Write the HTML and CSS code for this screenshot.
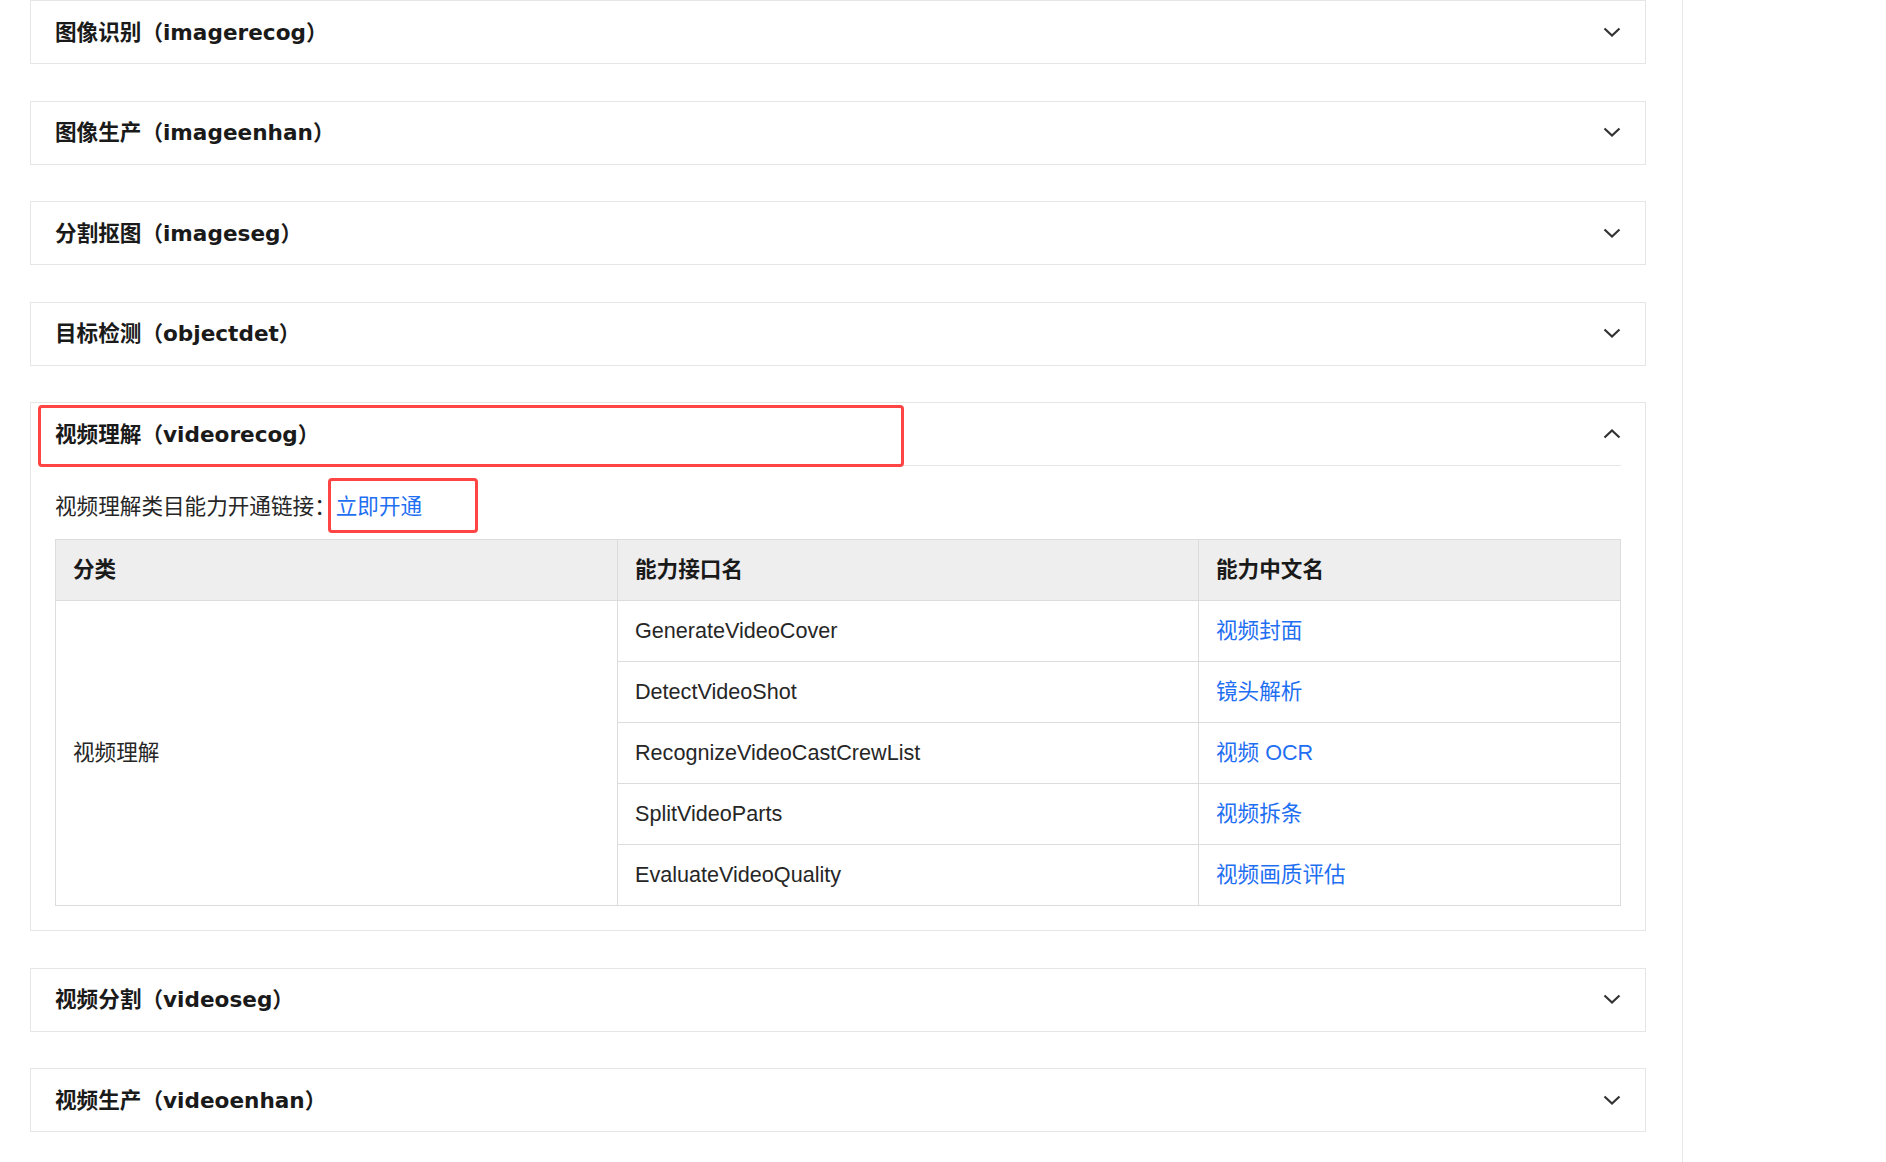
FILE: index.html
```html
<!DOCTYPE html>
<html lang="zh-CN">
<head>
    <meta charset="UTF-8">
    <meta name="viewport" content="width=device-width, initial-scale=1.0">
    <title>视觉智能开放平台 - 能力列表</title>
    <link rel="stylesheet" href="styles.css">
</head>
<body>
    <div class="page">
        <!-- Category list -->
        <main class="content">
            <section class="panel">
                <div class="panel-head">
                    <h3 class="panel-title">图像识别（imagerecog）</h3>
                    <svg class="chevron" viewBox="0 0 18 10"><polyline points="1.5,1.5 9,8.5 16.5,1.5"/></svg>
                </div>
            </section>

            <section class="panel">
                <div class="panel-head">
                    <h3 class="panel-title">图像生产（imageenhan）</h3>
                    <svg class="chevron" viewBox="0 0 18 10"><polyline points="1.5,1.5 9,8.5 16.5,1.5"/></svg>
                </div>
            </section>

            <section class="panel">
                <div class="panel-head">
                    <h3 class="panel-title">分割抠图（imageseg）</h3>
                    <svg class="chevron" viewBox="0 0 18 10"><polyline points="1.5,1.5 9,8.5 16.5,1.5"/></svg>
                </div>
            </section>

            <section class="panel">
                <div class="panel-head">
                    <h3 class="panel-title">目标检测（objectdet）</h3>
                    <svg class="chevron" viewBox="0 0 18 10"><polyline points="1.5,1.5 9,8.5 16.5,1.5"/></svg>
                </div>
            </section>

            <!-- Expanded category -->
            <section class="panel open">
                <div class="panel-head">
                    <h3 class="panel-title">视频理解（videorecog）</h3>
                    <svg class="chevron" viewBox="0 0 18 10"><polyline points="1.5,8.5 9,1.5 16.5,8.5"/></svg>
                </div>
                <div class="panel-body">
                    <p class="open-link">视频理解类目能力开通链接：<a href="#">立即开通</a></p>
                    <table class="ability-table">
                        <colgroup>
                            <col class="col-type">
                            <col class="col-api">
                            <col>
                        </colgroup>
                        <thead>
                            <tr>
                                <th>分类</th>
                                <th>能力接口名</th>
                                <th>能力中文名</th>
                            </tr>
                        </thead>
                        <tbody>
                            <tr>
                                <td rowspan="5">视频理解</td>
                                <td>GenerateVideoCover</td>
                                <td><a href="#">视频封面</a></td>
                            </tr>
                            <tr>
                                <td>DetectVideoShot</td>
                                <td><a href="#">镜头解析</a></td>
                            </tr>
                            <tr>
                                <td>RecognizeVideoCastCrewList</td>
                                <td><a href="#">视频 OCR</a></td>
                            </tr>
                            <tr>
                                <td>SplitVideoParts</td>
                                <td><a href="#">视频拆条</a></td>
                            </tr>
                            <tr>
                                <td>EvaluateVideoQuality</td>
                                <td><a href="#">视频画质评估</a></td>
                            </tr>
                        </tbody>
                    </table>
                </div>
                <!-- annotation boxes -->
                <span class="mark mark-title"></span>
                <span class="mark mark-link"></span>
            </section>

            <section class="panel">
                <div class="panel-head">
                    <h3 class="panel-title">视频分割（videoseg）</h3>
                    <svg class="chevron" viewBox="0 0 18 10"><polyline points="1.5,1.5 9,8.5 16.5,1.5"/></svg>
                </div>
            </section>

            <section class="panel">
                <div class="panel-head">
                    <h3 class="panel-title">视频生产（videoenhan）</h3>
                    <svg class="chevron" viewBox="0 0 18 10"><polyline points="1.5,1.5 9,8.5 16.5,1.5"/></svg>
                </div>
            </section>
        </main>

        <!-- Right rail -->
        <aside class="side"></aside>
    </div>
</body>
</html>
```

FILE: styles.css
```css
/* Global */
body {
    margin: 0;
    padding: 0;
    font-family: "Liberation Sans", "Noto Sans CJK SC", sans-serif;
    font-size: 21.6px;
    color: #262626;
    background-color: #ffffff;
}

a {
    color: #1f6ff2;
    text-decoration: none;
}

.page {
    display: flex;
    min-height: 100vh;
}

/* Main column */
.content {
    box-sizing: border-box;
    width: 1683px;
    flex-shrink: 0;
    padding: 0 36px 40px 30px;
    border-right: 1px solid #e8e8e8;
}

.side {
    flex: 1;
}

/* Collapsible panels */
.panel {
    position: relative;
    border: 1px solid #e6e6e6;
    background-color: #fff;
    margin-bottom: 36.5px;
}

.panel-head {
    display: flex;
    align-items: center;
    justify-content: space-between;
    height: 62px;
    margin: 0 24px;
}

.panel.open .panel-head {
    border-bottom: 1px solid #e6e6e6;
}

.panel-title {
    margin: 0 0 4px;
    font-family: "DejaVu Sans", "Noto Sans CJK SC", sans-serif;
    font-size: 21.6px;
    font-weight: bold;
    color: #1a1a1a;
}

.chevron {
    width: 18px;
    height: 10px;
    margin-bottom: 1px;
    fill: none;
    stroke: #333;
    stroke-width: 2.2;
}

.panel-body {
    padding: 0 24px 24px;
}

.open-link {
    margin: 0;
    padding-top: 24px;
    line-height: 34px;
    margin-bottom: 15px;
}

/* Ability table */
.ability-table {
    width: 100%;
    border-collapse: collapse;
    table-layout: fixed;
}

.ability-table .col-type {
    width: 562px;
}

.ability-table .col-api {
    width: 581px;
}

.ability-table th,
.ability-table td {
    border: 1px solid #dcdcdc;
    padding: 14px 18px 14px 17px;
    line-height: 32px;
    text-align: left;
    vertical-align: middle;
}

.ability-table th {
    background-color: #eeeeee;
    font-weight: bold;
    color: #1a1a1a;
}

/* Red annotation boxes */
.mark {
    position: absolute;
    box-sizing: border-box;
    border: 3px solid #ff4444;
    border-radius: 4px;
}

.mark-title {
    left: 7px;
    top: 2px;
    width: 866px;
    height: 62px;
}

.mark-link {
    left: 297px;
    top: 75px;
    width: 150px;
    height: 55px;
}
```
